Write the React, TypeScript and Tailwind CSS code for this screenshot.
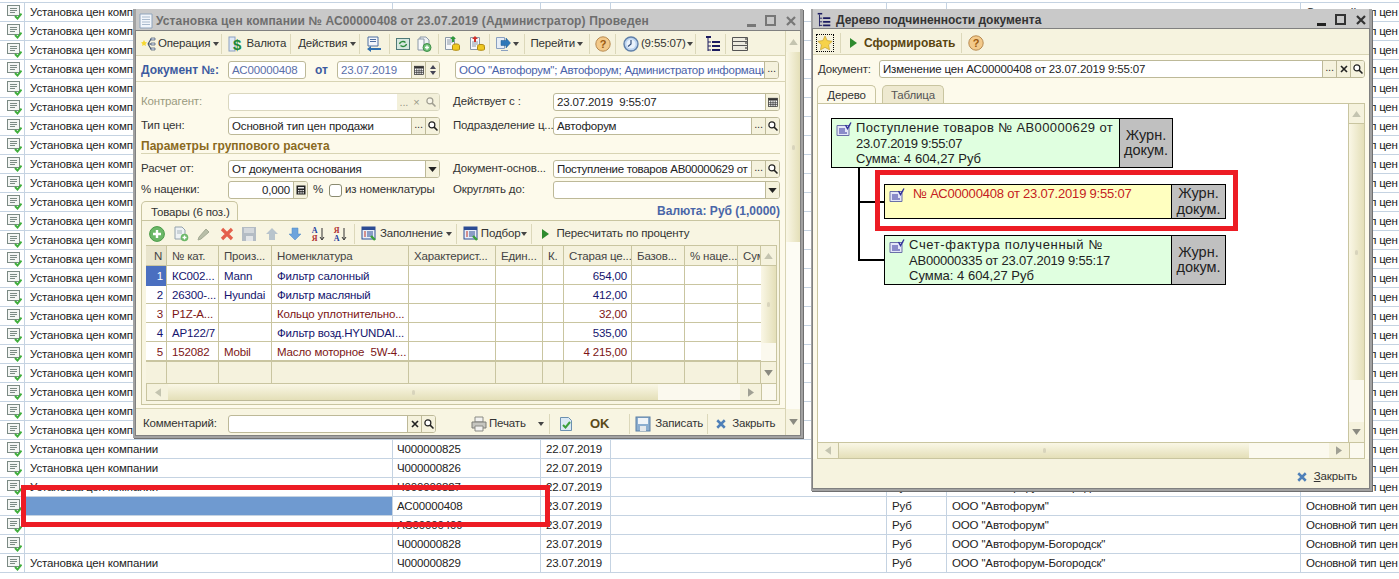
import type { ReactNode } from 'react'

// ---------- icons ----------
const Svg = ({ children, className = 'w-4 h-4' }: { children: ReactNode; className?: string }) => (
  <svg viewBox="0 0 16 16" className={'shrink-0 ' + className}>{children}</svg>
)

const RowDoc = () => (
  <Svg>
    <rect x="1.5" y="1.5" width="12" height="10" fill="#f4f6f4" stroke="#7b8a84" />
    <path d="M4 4.5h7M4 6.5h7M4 8.5h5" stroke="#7b8a84" />
    <path d="M9 12l2.5 2.5L15.5 9.5" fill="none" stroke="#3fae3c" strokeWidth="2" />
  </Svg>
)
const TreeDoc = () => (
  <Svg>
    <path d="M1 3.5h13l-1 1v9H1z" fill="#e4e6f8" stroke="#6a70a8" />
    <path d="M3 7h6M3 9h6M3 11h8" stroke="#30309a" />
    <path d="M9.5 3l2 3.5L15 .5" fill="none" stroke="#30309a" strokeWidth="1.4" />
  </Svg>
)
const OpIcon = () => (
  <Svg>
    <path d="M4 4l1 2 2 .5-1.5 1.5.5 2-2-1-2 1 .5-2L1 6.5 3 6z" fill="#f6d832" />
    <path d="M8 8l3-5h4M8 8h7M8 8l3 5h4" fill="none" stroke="#44546e" strokeWidth="1.2" />
    <path d="M11 2h4v2h-4zM11 7h4v2h-4zM11 12h4v2h-4z" fill="#dfe7f4" stroke="#44546e" strokeWidth=".7" />
  </Svg>
)
const Dollar = () => (
  <Svg>
    <rect x="1" y="1" width="6" height="14" fill="#dfe8f6" stroke="#8aa0c0" />
    <text x="9" y="14" textAnchor="middle" fontSize="15" fontWeight="700" fill="#1d8a3a" fontFamily="Liberation Sans">$</text>
  </Svg>
)
const DocArrow = () => (
  <Svg>
    <path d="M2 1h10v9H2z" fill="#f3f6fb" stroke="#4f6ea0" />
    <path d="M4 3.5h6M4 5.5h6" stroke="#4f6ea0" />
    <path d="M1 13l4-3v2h10v2H5v2z" fill="#2f6fb0" />
  </Svg>
)
const Refresh = () => (
  <Svg>
    <rect x="1.5" y="2.5" width="13" height="11" fill="#d6e8e0" stroke="#4f7a78" />
    <path d="M4.5 8a3.5 3 0 016-1.5M11.5 8a3.5 3 0 01-6 1.5" fill="none" stroke="#2a8a3a" strokeWidth="1.4" />
  </Svg>
)
const DocPlus = () => (
  <Svg>
    <path d="M4 1h6l3 3v8H4z" fill="#eef1f4" stroke="#8b98a6" />
    <path d="M2 3h6v11H2z" fill="#f7f8fa" stroke="#8b98a6" />
    <circle cx="11" cy="11.5" r="4" fill="#6fbf78" stroke="#3f8f48" />
    <path d="M9 11.5h4M11 9.5v4" stroke="#fff" strokeWidth="1.4" />
  </Svg>
)
const DocCoins = () => (
  <Svg>
    <path d="M1.5 1.5h9v12h-9z" fill="#f6f7fa" stroke="#8b98a6" />
    <path d="M3 4h6M3 6h6M3 8h4" stroke="#8b98a6" />
    <path d="M9 0l3 3h-2v3H8V3H6z" fill="#2f9a3a" />
    <ellipse cx="12" cy="9.5" rx="3.5" ry="1.6" fill="#f0c820" stroke="#b08a10" />
    <path d="M8.5 10v3.5c0 1 7 1 7 0V10" fill="#f0c820" stroke="#b08a10" />
  </Svg>
)
const DocRed = () => (
  <Svg>
    <path d="M1.5 1.5h9v12h-9z" fill="#f6f7fa" stroke="#8b98a6" />
    <path d="M3 6h6M3 8h6M3 10h4" stroke="#8b98a6" />
    <path d="M6 0l3 3H7v3H5V3H3z" fill="#d03028" />
    <ellipse cx="12" cy="10" rx="3.5" ry="1.6" fill="#f0c820" stroke="#b08a10" />
    <path d="M8.5 10.5v3c0 1 7 1 7 0v-3" fill="#f0c820" stroke="#b08a10" />
  </Svg>
)
const Transfer = () => (
  <Svg>
    <path d="M1.5 1.5h8v11h-8z" fill="#e6edf6" stroke="#8aa0c0" />
    <path d="M6 4.5h5V2l4.5 5-4.5 5V9.5H6z" fill="#2f78b8" stroke="#1e5a90" strokeWidth=".5" />
    <path d="M6 14h7v1H6z" fill="#8aa0c0" />
  </Svg>
)
const Help = () => (
  <Svg>
    <circle cx="8" cy="8" r="7.2" fill="#f3c98a" stroke="#b88a50" />
    <text x="8" y="12" textAnchor="middle" fontSize="11" fontWeight="700" fill="#9a5a10" fontFamily="Liberation Sans">?</text>
  </Svg>
)
const Clock = () => (
  <Svg>
    <circle cx="8" cy="8" r="7" fill="#bcd4f0" stroke="#5f7fa8" strokeWidth="1.4" />
    <circle cx="8" cy="8" r="4.6" fill="#eaf2fb" />
    <path d="M8 4v4l-3 2.5" fill="none" stroke="#34507c" strokeWidth="1.2" />
  </Svg>
)
const TreeIco = () => (
  <Svg>
    <path d="M1 0h5v2H1z" fill="#1c1c60" />
    <path d="M3 2v13M3 6h3M3 10h3M3 14h3" stroke="#1c1c60" />
    <path d="M7 5h8v2H7zM7 9h8v2H7zM7 13h8v2H7z" fill="#1c1c60" />
  </Svg>
)
const ListIco = () => (
  <Svg className="w-[18px] h-4">
    <path d="M.5 1.5h15v4H.5zM.5 5.5h15v4H.5zM.5 9.5h15v5H.5z" fill="#eceadf" stroke="#555" />
    <path d="M13 3h2M13 7h2M13 12h2" stroke="#222" />
  </Svg>
)
const Calendar = () => (
  <Svg className="w-3 h-3">
    <rect x="2" y="3" width="12" height="11" fill="#fff" stroke="#333" />
    <path d="M2 3h12v3H2z" fill="#333" />
    <path d="M5 6v8M8 6v8M11 6v8M2 9h12M2 11.5h12" stroke="#333" />
  </Svg>
)
const Calc = () => (
  <Svg className="w-3 h-3">
    <rect x="2" y="2" width="12" height="12" fill="#222" />
    <path d="M4 4h8v2H4z" fill="#eee" />
    <path d="M4 8h2v1.5H4zM7 8h2v1.5H7zM10 8h2v1.5h-2zM4 11h2v1.5H4zM7 11h2v1.5H7zM10 11h2v1.5h-2z" fill="#eee" />
  </Svg>
)
const Search = () => (
  <Svg className="w-3 h-3">
    <circle cx="6.5" cy="6.5" r="4" fill="#fff" stroke="#222" strokeWidth="1.6" />
    <path d="M9.5 9.5L14 14" stroke="#222" strokeWidth="2" />
  </Svg>
)
const Cross = () => (
  <Svg className="w-3 h-3">
    <path d="M4 4l8 8M12 4l-8 8" stroke="#222" strokeWidth="2.2" />
  </Svg>
)
const Caret = () => (
  <svg viewBox="0 0 10 6" className="w-[9px] h-[5px] shrink-0"><path d="M0 0h10L5 6z" fill="#222" /></svg>
)
const MiniCaret = () => (
  <svg viewBox="0 0 6 4" className="w-[6px] h-[4px] shrink-0"><path d="M0 0h6L3 4z" fill="#444" /></svg>
)
const AddGreen = () => (
  <Svg>
    <circle cx="8" cy="8" r="7.4" fill="#6cb868" stroke="#4a9a48" />
    <path d="M4 8h8M8 4v8" stroke="#fff" strokeWidth="2.4" />
  </Svg>
)
const DocAdd = () => (
  <Svg>
    <path d="M2 1h7l3 3v9H2z" fill="#eef2f4" stroke="#94a2ac" />
    <path d="M4 5h5M4 7h5" stroke="#a8b4bc" />
    <circle cx="11.5" cy="11.5" r="3.8" fill="#6cb868" />
    <path d="M9.5 11.5h4M11.5 9.5v4" stroke="#fff" strokeWidth="1.4" />
  </Svg>
)
const Pencil = () => (
  <Svg>
    <path d="M3 11l7-8 3 3-8 7-3 1z" fill="#b8bea8" stroke="#a4aa94" />
  </Svg>
)
const RedX = () => (
  <Svg>
    <path d="M3 3l10 10M13 3L3 13" stroke="#e4604c" strokeWidth="3.2" />
  </Svg>
)
const SaveGray = () => (
  <Svg>
    <rect x="1" y="1" width="14" height="14" fill="#b4bcc4" />
    <rect x="3" y="2" width="10" height="5" fill="#d4d8dc" />
    <rect x="5" y="10" width="7" height="5" fill="#e4e6e8" />
  </Svg>
)
const ArrowUp = () => (
  <Svg><path d="M8 2l6 6h-3v6H5V8H2z" fill="#b8c4cc" /></Svg>
)
const ArrowDown = () => (
  <Svg><path d="M8 14l6-6h-3V2H5v6H2z" fill="#6ea4dc" stroke="#4f88c4" strokeWidth=".5" /></Svg>
)
const Sort = ({ top, bottom, c1, c2 }: { top: string; bottom: string; c1: string; c2: string }) => (
  <Svg>
    <text x="4.5" y="7" textAnchor="middle" fontSize="8" fontWeight="700" fill={c1} fontFamily="Liberation Serif">{top}</text>
    <text x="4.5" y="15" textAnchor="middle" fontSize="8" fontWeight="700" fill={c2} fontFamily="Liberation Serif">{bottom}</text>
    <path d="M12 2v11M10 11l2 3 2-3" fill="none" stroke="#333" />
  </Svg>
)
const FillIco = () => (
  <Svg>
    <rect x="1" y="1" width="13" height="12" fill="#e8eef8" stroke="#2c4c94" />
    <path d="M1 1h13v3H1z" fill="#2c4c94" />
    <path d="M3 6h2M3 8h2M3 10h2" stroke="#c03020" />
    <path d="M6 6h6M6 8h6M6 10h6" stroke="#2c4c94" />
    <path d="M10 10l4 4" stroke="#3aa03a" strokeWidth="2.4" />
  </Svg>
)
const Play = () => (
  <svg viewBox="0 0 7 10" className="w-[7px] h-[10px] shrink-0"><path d="M0 0l7 5-7 5z" fill="#2e8b2e" /></svg>
)
const Printer = () => (
  <Svg>
    <path d="M4 1h8v5H4z" fill="#f2f2f0" stroke="#8a8a84" />
    <path d="M1 6h14v6H1z" fill="#c6c6c0" stroke="#7c7c76" />
    <path d="M4 10h8v5H4z" fill="#f2f2f0" stroke="#8a8a84" />
  </Svg>
)
const DocCheck = () => (
  <Svg>
    <path d="M2.5 1.5h8l3 3v10h-11z" fill="#dbe9f4" stroke="#6c90b0" />
    <path d="M5 9l2.5 2.5L12 6" fill="none" stroke="#3ca03c" strokeWidth="2" />
  </Svg>
)
const SaveBlue = () => (
  <Svg>
    <rect x="1" y="1" width="14" height="14" fill="#8caed0" stroke="#5a7fa4" />
    <rect x="3" y="2" width="10" height="6" fill="#f0f4f8" />
    <rect x="5" y="10" width="6" height="5" fill="#e4e8ec" />
  </Svg>
)
const BlueX = () => (
  <Svg className="w-3 h-3">
    <path d="M3 3l10 10M13 3L3 13" stroke="#4f80b8" strokeWidth="3.4" />
  </Svg>
)
const StarIco = () => (
  <Svg>
    <path d="M8 1l2.2 4.6 5 .7-3.6 3.5.9 5L8 12.4l-4.5 2.4.9-5L.8 6.3l5-.7z" fill="#f6d24a" stroke="#c4a030" strokeWidth=".7" />
  </Svg>
)

// ---------- small pieces ----------
const Sep = ({ className = '' }: { className?: string }) => (
  <div className={'w-px h-[20px] shrink-0 bg-[#dcd8ba] ' + className} />
)

const Btn = ({ children, className = 'w-[14px]' }: { children: ReactNode; className?: string }) => (
  <div className={'flex items-center justify-center self-stretch shrink-0 border-l border-[#bdb998] bg-[#f5f2dd] ' + className}>{children}</div>
)

const Dots = () => <span className="text-[11px] leading-none text-[#333] -mt-[3px]">...</span>

const Field = ({ className, text, color = 'text-[#222]', right, children }: { className: string; text?: string; color?: string; right?: boolean; children?: ReactNode }) => (
  <div className={'flex items-stretch shrink-0 h-[18px] bg-white border border-[#bdb998] rounded-[3px] overflow-hidden ' + className}>
    <div className={'flex-1 min-w-0 px-[3px] leading-[16px] whitespace-pre overflow-hidden ' + color + (right ? ' text-right' : '')}>{text}</div>
    {children}
  </div>
)

const LookupBtns = () => (
  <>
    <Btn><Dots /></Btn>
    <Btn><Search /></Btn>
  </>
)

const WinButtons = ({ tone, bar, box, edge }: { tone: string; bar: string; box: string; edge: string }) => (
  <div className={'ml-auto flex items-center ' + edge}>
    <div className={'w-[9px] h-[3px] mt-[9px] ' + bar} />
    <div className={'ml-[9px] w-[11px] h-[11px] border-2 ' + box} />
    <svg viewBox="0 0 12 12" className="ml-[9px] w-3 h-3"><path d="M2 2l8 8M10 2l-8 8" stroke={tone} strokeWidth="2.2" /></svg>
  </div>
)

const ScrollUp = () => <svg viewBox="0 0 10 7" className="w-[9px] h-[6px]"><path d="M5 0l5 7H0z" fill="#c4c4b0" /></svg>
const ScrollDown = () => <svg viewBox="0 0 10 7" className="w-[9px] h-[6px]"><path d="M5 7l5-7H0z" fill="#8a8a80" /></svg>
const ScrollLeft = () => <svg viewBox="0 0 7 10" className="w-[6px] h-[9px]"><path d="M0 5l7-5v10z" fill="#c4c4b0" /></svg>
const ScrollRight = () => <svg viewBox="0 0 7 10" className="w-[6px] h-[9px]"><path d="M7 5L0 0v10z" fill="#a0a094" /></svg>

const Thumb = 'bg-gradient-to-r from-[#faf7e6] to-[#e4dfb8]'
const ThumbH = 'bg-gradient-to-b from-[#faf7e6] to-[#e4dfb8]'

const Grip = () => <div className="w-[3px] h-[5px] rounded-full bg-[#d8d4bc]" />

// ---------- background list ----------
type Row = { name?: string; doc?: string; date?: string; cur?: string; org?: string; sel?: boolean }

const NAME = 'Установка цен компании'
const rows: Row[] = [
  ...Array.from({ length: 23 }, () => ({ name: NAME })),
  { name: NAME, doc: 'Ч000000825', date: '22.07.2019' },
  { name: NAME, doc: 'Ч000000826', date: '22.07.2019' },
  { name: NAME, doc: 'Ч000000827', date: '22.07.2019', cur: 'Руб', org: 'ООО "Автофорум-Богородск"' },
  { doc: 'АС00000408', date: '23.07.2019', cur: 'Руб', org: 'ООО "Автофорум"', sel: true },
  { doc: 'АС00000409', date: '23.07.2019', cur: 'Руб', org: 'ООО "Автофорум"' },
  { doc: 'Ч000000828', date: '23.07.2019', cur: 'Руб', org: 'ООО "Автофорум-Богородск"' },
  { name: NAME, doc: 'Ч000000829', date: '23.07.2019', cur: 'Руб', org: 'ООО "Автофорум-Богородск"' },
]

const ListRow = ({ row }: { row: Row }) => (
  <div className="grid grid-cols-[25px_368px_148px_70px_276px_60px_354px_98px] h-[19px] border-b border-[#c5d3e2] text-[11.5px] tracking-[-0.15px] leading-[18px] text-[#222] whitespace-nowrap">
    <div className="border-r border-[#c5d3e2] pl-[6px] pt-px"><RowDoc /></div>
    <div className={'border-r border-[#c5d3e2] pl-[5px] ' + (row.sel ? 'bg-[#6f9ad0]' : '')}>{row.name}</div>
    <div className="border-r border-[#c5d3e2] pl-[4px]">{row.doc}</div>
    <div className="border-r border-[#c5d3e2] pl-[5px]">{row.date}</div>
    <div className="border-r border-[#c5d3e2]" />
    <div className="border-r border-[#c5d3e2] pl-[5px]">{row.cur}</div>
    <div className="border-r border-[#c5d3e2] pl-[5px]">{row.org}</div>
    <div className="pl-[5px] tracking-[-0.3px]">Основной тип цен</div>
  </div>
)

// ---------- price document window ----------
type Goods = { n: number; cat: string; maker: string; item: string; price: string; red?: boolean; sel?: boolean }

const goods: Goods[] = [
  { n: 1, cat: 'КС002...', maker: 'Mann', item: 'Фильтр салонный', price: '654,00', sel: true },
  { n: 2, cat: '26300-...', maker: 'Hyundai', item: 'Фильтр масляный', price: '412,00' },
  { n: 3, cat: 'P1Z-A...', maker: '', item: 'Кольцо уплотнительно...', price: '32,00', red: true },
  { n: 4, cat: 'AP122/7', maker: '', item: 'Фильтр возд.HYUNDAI...', price: '535,00' },
  { n: 5, cat: '152082', maker: 'Mobil', item: 'Масло моторное  5W-4...', price: '4 215,00', red: true },
]

const tableCols = 'grid grid-cols-[21px_52px_53px_137px_87px_47px_21px_68px_53px_53px_23px]'
const headers = ['N', '№ кат.', 'Произ...', 'Номенклатура', 'Характерист...', 'Един...', 'К.', 'Старая це...', 'Базов...', '% наце...', 'Сум']

const GoodsTable = () => (
  <div className="ml-[4px] w-[631px] border-b border-[#bdb998] flex flex-col">
    <div className="flex">
      <div className="w-[615px]">
        <div className={tableCols + ' h-[21px] bg-[#f5f2dd] text-[#444] leading-[20px] border-y border-[#c9c5a0]'}>
          {headers.map((h, i) => (
            <div key={h} className={'border-r border-[#c9c5a0] overflow-hidden whitespace-nowrap ' + (i === 0 ? 'pl-[8px] bg-[#e8e4cc]' : 'pl-[5px]')}>{h}</div>
          ))}
        </div>
        {goods.map((g) => {
          const tone = g.red ? 'text-[#7c1414]' : 'text-[#14146e]'
          return (
            <div key={g.n} className={tableCols + ' h-[19px] bg-white leading-[20px] border-b border-[#c9c5a0] whitespace-pre ' + tone}>
              <div className={'border-r border-[#c9c5a0] text-right pr-[3px] ' + (g.sel ? 'bg-[#4a6fc0] text-white' : '')}>{g.n}</div>
              <div className="border-r border-[#c9c5a0] pl-[5px]">{g.cat}</div>
              <div className="border-r border-[#c9c5a0] pl-[5px]">{g.maker}</div>
              <div className="border-r border-[#c9c5a0] pl-[5px] overflow-hidden">{g.item}</div>
              <div className="border-r border-[#c9c5a0]" />
              <div className="border-r border-[#c9c5a0]" />
              <div className="border-r border-[#c9c5a0]" />
              <div className="border-r border-[#c9c5a0] text-right pr-[4px]">{g.price}</div>
              <div className="border-r border-[#c9c5a0]" />
              <div className="border-r border-[#c9c5a0]" />
              <div />
            </div>
          )
        })}
        <div className={tableCols + ' h-[23px] bg-[#f5f2dd] border-y border-[#c9c5a0]'}>
          {headers.map((h) => <div key={h} className="border-r border-[#c9c5a0]" />)}
        </div>
      </div>
      <div className="w-[16px] flex flex-col border-y border-r border-[#c9c5a0]">
        <div className="h-[20px] flex items-center justify-center bg-[#f5f2dd] border-b border-[#c9c5a0]"><ScrollUp /></div>
        <div className={'h-[77px] flex items-center justify-center ' + Thumb}><Grip /></div>
        <div className="flex-1 bg-[#fbf9ee]" />
        <div className="h-[22px] flex items-center justify-center bg-[#f5f2dd] border-t border-[#c9c5a0]"><ScrollDown /></div>
      </div>
    </div>
    <div className="flex h-[16px] border-l border-r border-[#c9c5a0]">
      <div className="w-[21px] flex items-center justify-center bg-[#f5f2dd]"><ScrollLeft /></div>
      <div className={'w-[490px] flex items-center justify-center ' + ThumbH}><Grip /></div>
      <div className="w-[82px] bg-[#fbf9ee]" />
      <div className="w-[21px] flex items-center justify-center bg-[#f5f2dd]"><ScrollRight /></div>
      <div className="flex-1 border-l border-[#c9c5a0] bg-[#fbf9ee]" />
    </div>
  </div>
)

const bold = 'font-bold text-[12px] tracking-normal'

const PriceWindow = () => (
  <div className="absolute left-[133px] top-[9px] w-[670px] h-[429px] flex flex-col bg-[#c9c9c9] border-x-[3px] border-b-[3px] border-[#a2a2a2] shadow-[1px_1px_0_#707070]">
    <div className="h-[22px] shrink-0 flex items-center pl-[3px] pt-px text-[12px] tracking-[0.12px] font-bold text-[#6e6e6e] whitespace-nowrap">
      <svg viewBox="0 0 14 16" className="w-[14px] h-[16px] shrink-0">
        <path d="M1 1h12v14H1z" fill="#f2f6fb" stroke="#8fa4bc" />
        <path d="M3 4h8M3 6.5h8M3 9h8M3 11.5h8" stroke="#a9bacd" />
      </svg>
      <span className="ml-[3px]">Установка цен компании № АС00000408 от 23.07.2019 (Администратор) Проведен</span>
      <WinButtons tone="#777" bar="bg-[#777]" box="border-[#777]" edge="mr-[3px]" />
    </div>
    <div className="flex-1 min-h-0 flex bg-[#fdfaeb] text-[11.5px] tracking-[-0.15px] text-[#333] shadow-[0_0_0_1px_#808080]">
      <div className="flex-1 min-w-0 flex flex-col">
        {/* toolbar */}
        <div className="h-[25px] shrink-0 flex items-center border-b border-[#d8d4b4] bg-[#f6f3df] whitespace-nowrap pt-[2px]">
          <div className="ml-[4px]"><OpIcon /></div>
          <span className="ml-[2px]">Операция</span>
          <div className="ml-[3px]"><MiniCaret /></div>
          <Sep className="ml-[2px]" />
          <div className="ml-[6px]"><Dollar /></div>
          <span className="ml-[2px]">Валюта</span>
          <Sep className="ml-[4px]" />
          <span className="ml-[7px]">Действия</span>
          <div className="ml-[3px]"><MiniCaret /></div>
          <Sep className="ml-[3px]" />
          <div className="ml-[6px]"><DocArrow /></div>
          <Sep className="ml-[7px]" />
          <div className="ml-[5px]"><Refresh /></div>
          <div className="ml-[5px]"><DocPlus /></div>
          <Sep className="ml-[6px]" />
          <div className="ml-[5px]"><DocCoins /></div>
          <div className="ml-[9px]"><DocRed /></div>
          <Sep className="ml-[4px]" />
          <div className="ml-[5px]"><Transfer /></div>
          <div className="ml-[2px]"><MiniCaret /></div>
          <Sep className="ml-[5px]" />
          <span className="ml-[5px]">Перейти</span>
          <div className="ml-[2px]"><MiniCaret /></div>
          <Sep className="ml-[6px]" />
          <div className="ml-[5px]"><Help /></div>
          <Sep className="ml-[4px]" />
          <div className="ml-[7px]"><Clock /></div>
          <span className="ml-[2px]">(9:55:07)</span>
          <div className="ml-[1px]"><MiniCaret /></div>
          <Sep className="ml-[2px]" />
          <div className="ml-[9px]"><TreeIco /></div>
          <Sep className="ml-[4px]" />
          <div className="ml-[5px]"><ListIco /></div>
        </div>
        {/* document row */}
        <div className="h-[26px] shrink-0 flex items-center border-b border-[#d8d4b4] pl-[5px] pt-[2px]">
          <div className={'w-[87px] text-[#3c5aa0] ' + bold}>Документ №:</div>
          <Field className="w-[78px]" text="АС00000408" color="text-[#5a6ea8]" />
          <div className={'w-[31px] text-center text-[#3c5aa0] ' + bold}>от</div>
          <Field className="w-[103px]" text="23.07.2019" color="text-[#5a6ea8]">
            <Btn><Calendar /></Btn>
            <Btn className="w-[14px] flex-col gap-[2px]"><span className="w-0 h-0 border-x-[3px] border-x-transparent border-b-[4px] border-b-[#445]" /><span className="w-0 h-0 border-x-[3px] border-x-transparent border-t-[4px] border-t-[#445]" /></Btn>
          </Field>
          <Field className="ml-[15px] w-[324px]" text={'ООО "Автофорум"; Автофорум; Администратор информаци'} color="text-[#4a62a8] tracking-[-0.25px]">
            <Btn><Dots /></Btn>
          </Field>
        </div>
        {/* form */}
        <div className="pl-[5px] pt-[11px] flex flex-col">
          <div className="flex items-center h-[18px]">
            <div className="w-[87px] text-[#9a9a80]">Контрагент:</div>
            <div className="w-[212px] h-[18px] flex bg-white border border-[#dad7bf] rounded-[3px] overflow-hidden">
              <div className="flex-1" />
              <div className="w-[42px] flex items-center justify-around bg-[#f3f0da] text-[#9a9a88] text-[11px]"><span>...</span><span>×</span><span className="opacity-40"><Search /></span></div>
            </div>
            <div className="ml-[13px] w-[100px]">Действует с :</div>
            <Field className="w-[227px]" text="23.07.2019  9:55:07">
              <Btn><Calendar /></Btn>
            </Field>
          </div>
          <div className="flex items-center h-[18px] mt-[6px]">
            <div className="w-[87px]">Тип цен:</div>
            <Field className="w-[212px]" text="Основной тип цен продажи"><LookupBtns /></Field>
            <div className="ml-[13px] w-[100px] whitespace-nowrap">Подразделение ц...</div>
            <Field className="w-[227px]" text="Автофорум"><LookupBtns /></Field>
          </div>
          <div className={'mt-[2px] h-[17px] mr-[5px] leading-[18px] text-[#8a6a1e] border-b border-[#d8d4b4] ' + bold}>Параметры группового расчета</div>
          <div className="flex items-center h-[18px] mt-[6px]">
            <div className="w-[87px]">Расчет от:</div>
            <Field className="w-[212px]" text="От документа основания"><Btn><Caret /></Btn></Field>
            <div className="ml-[13px] w-[100px] whitespace-nowrap">Документ-основ...</div>
            <Field className="w-[227px]" text="Поступление товаров АВ00000629 от :" color="text-[#222] tracking-[-0.3px]"><LookupBtns /></Field>
          </div>
          <div className="flex items-center h-[18px] mt-[3px]">
            <div className="w-[87px]">% наценки:</div>
            <Field className="w-[80px]" text="0,000" right><Btn><Calc /></Btn></Field>
            <span className="ml-[5px] w-[15px]">%</span>
            <div className="ml-[1px] w-[13px] h-[13px] bg-white border border-[#8a8a70] rounded-[3px]" />
            <span className="ml-[3px] w-[95px] whitespace-nowrap">из номенклатуры</span>
            <div className="ml-[13px] w-[100px]">Округлять до:</div>
            <Field className="w-[227px]"><Btn><Caret /></Btn></Field>
          </div>
        </div>
        {/* tabs */}
        <div className="mt-[2px] h-[19px] shrink-0 pl-[5px] pr-[5px] flex items-stretch">
          <div className="w-[97px] pl-[9px] bg-[#fbf8e6] border border-b-0 border-[#c9c5a0] rounded-t-[5px] leading-[20px]">Товары (6 поз.)</div>
          <div className={'ml-auto text-[#4a66a8] leading-[20px] ' + bold}>Валюта: Руб (1,0000)</div>
        </div>
        <div className="ml-[5px] mr-[5px] h-[185px] shrink-0 border border-[#c9c5a0] bg-[#f8f5e2]">
          <div className="h-[24px] flex items-center whitespace-nowrap pt-px">
            <div className="ml-[7px]"><AddGreen /></div>
            <div className="ml-[8px]"><DocAdd /></div>
            <div className="ml-[7px]"><Pencil /></div>
            <div className="ml-[7px]"><RedX /></div>
            <div className="ml-[6px]"><SaveGray /></div>
            <div className="ml-[7px]"><ArrowUp /></div>
            <div className="ml-[7px]"><ArrowDown /></div>
            <div className="ml-[7px]"><Sort top="А" bottom="Я" c1="#1c3c9c" c2="#b03030" /></div>
            <div className="ml-[6px]"><Sort top="Я" bottom="А" c1="#b03030" c2="#1c3c9c" /></div>
            <Sep className="ml-[6px]" />
            <div className="ml-[6px]"><FillIco /></div>
            <span className="ml-[3px]">Заполнение</span>
            <div className="ml-[3px]"><MiniCaret /></div>
            <Sep className="ml-[4px]" />
            <div className="ml-[6px]"><FillIco /></div>
            <span className="ml-[2px]">Подбор</span>
            <div className="ml-[1px]"><MiniCaret /></div>
            <Sep className="ml-[4px]" />
            <div className="ml-[10px]"><Play /></div>
            <span className="ml-[7px]">Пересчитать по проценту</span>
          </div>
          <GoodsTable />
        </div>
        {/* footer */}
        <div className="mt-[3px] flex-1 border-t border-[#d8d4b4] bg-[#f8f5e2] flex items-center whitespace-nowrap pl-[7px] pt-[3px]">
          <div className="w-[85px]">Комментарий:</div>
          <Field className="w-[208px]">
            <Btn><Cross /></Btn>
            <Btn><Search /></Btn>
          </Field>
          <div className="ml-[35px]"><Printer /></div>
          <span className="ml-[2px] w-[35px]">Печать</span>
          <div className="ml-[14px]"><MiniCaret /></div>
          <Sep className="ml-[5px]" />
          <div className="ml-[8px]"><DocCheck /></div>
          <span className="ml-[16px] font-bold text-[13px] text-[#5a4a1a]">OK</span>
          <Sep className="ml-[20px]" />
          <div className="ml-[5px]"><SaveBlue /></div>
          <span className="ml-[4px]">Записать</span>
          <Sep className="ml-[4px]" />
          <div className="ml-[7px]"><BlueX /></div>
          <span className="ml-[5px]">Закрыть</span>
        </div>
      </div>
      {/* window scrollbar */}
      <div className="w-[15px] shrink-0 flex flex-col border-l border-[#d8d4b4]">
        <div className="h-[21px] flex items-center justify-center bg-[#f6f3df]"><ScrollUp /></div>
        <div className={'h-[190px] flex items-center justify-center ' + Thumb}><Grip /></div>
        <div className="flex-1 bg-[#fdfcf4]" />
        <div className="h-[26px] flex items-center justify-center bg-[#f6f3df]"><ScrollDown /></div>
      </div>
    </div>
  </div>
)

// ---------- subordination tree window ----------
const TreeCard = ({ className, tone, children, journal }: { className: string; tone: string; children: ReactNode; journal: string }) => (
  <div className={'absolute flex border border-black text-[13px] tracking-normal leading-[15.5px] ' + tone + ' ' + className}>
    <div className="flex-1 min-w-0 flex pl-[4px] pt-[1px]">
      <div className="w-[16px] shrink-0 pt-[2px]"><TreeDoc /></div>
      <div className="pl-[4px] whitespace-nowrap">{children}</div>
    </div>
    <div className={'shrink-0 flex flex-col items-center justify-center bg-[#c0c0c0] border-l border-black text-[#222] text-[14.5px] ' + journal}>
      <span>Журн.</span>
      <span>докум.</span>
    </div>
  </div>
)

const TreeWindow = () => (
  <div className="absolute left-[811px] top-[9px] w-[561px] h-[482px] flex flex-col bg-[#c9c9c9] border-l-2 border-r-[3px] border-b-[3px] border-[#a2a2a2] shadow-[1px_1px_0_#707070]">
    <div className="h-[20px] shrink-0 flex items-center pl-[3px] pt-px text-[12px] font-bold text-[#333] whitespace-nowrap">
      <div className="scale-90"><TreeIco /></div>
      <span className="ml-[4px]">Дерево подчиненности документа</span>
      <WinButtons tone="#333" bar="bg-[#222]" box="border-[#333]" edge="mr-[2px]" />
    </div>
    <div className="flex-1 min-h-0 flex flex-col bg-[#fdfaeb] text-[11.5px] tracking-[-0.15px] text-[#333] shadow-[0_0_0_1px_#808080]">
      <div className="h-[26px] shrink-0 flex items-center bg-[#f6f3df] border-b border-[#d8d4b4] pt-[2px]">
        <div className="ml-[3px] w-[18px] h-[18px] border border-dotted border-black"><StarIco /></div>
        <Sep className="ml-[6px]" />
        <div className="ml-[9px]"><Play /></div>
        <span className={'ml-[7px] text-[#5a4510] ' + bold}>Сформировать</span>
        <Sep className="ml-[6px]" />
        <div className="ml-[6px]"><Help /></div>
      </div>
      <div className="h-[30px] shrink-0 flex items-start pt-[5px] pl-[5px]">
        <div className="w-[61px] leading-[18px]">Документ:</div>
        <Field className="w-[486px]" text="Изменение цен АС00000408 от 23.07.2019 9:55:07">
          <Btn><Dots /></Btn>
          <Btn><Cross /></Btn>
          <Btn><Search /></Btn>
        </Field>
      </div>
      <div className="h-[18px] shrink-0 pl-[4px] flex items-stretch">
        <div className="w-[59px] text-center leading-[18px] bg-[#fdfaeb] border border-b-0 border-[#c9c5a0] rounded-t-[5px]">Дерево</div>
        <div className="ml-[6px] w-[62px] text-center leading-[18px] bg-[#eee9d0] border border-b-0 border-[#c9c5a0] rounded-t-[5px] text-[#555]">Таблица</div>
      </div>
      <div className="ml-[4px] w-[548px] h-[356px] shrink-0 flex flex-col border border-[#c9c5a0]">
        <div className="flex-1 min-h-0 flex">
          <div className="flex-1 relative bg-white text-[#222]">
            <div className="absolute left-[40px] top-[64px] w-[2px] h-[93px] bg-black" />
            <div className="absolute left-[40px] top-[97px] w-[27px] h-[2px] bg-black" />
            <div className="absolute left-[40px] top-[155px] w-[27px] h-[2px] bg-black" />
            <TreeCard className="left-[13px] top-[14px] w-[342px] h-[50px]" tone="bg-[#e0ffe0]" journal="w-[53px]">
              <span className="block tracking-[0.37px]">Поступление товаров № АВ00000629 от</span>
              <span className="block tracking-[-0.33px]">23.07.2019 9:55:07</span>
              <span className="block">Сумма: 4 604,27 Руб</span>
            </TreeCard>
            <TreeCard className="left-[66px] top-[80px] w-[342px] h-[35px]" tone="bg-[#ffffc0]" journal="w-[54px]">
              <span className="block pl-[4px] tracking-[-0.2px] text-[#c42020]">№ АС00000408 от 23.07.2019 9:55:07</span>
            </TreeCard>
            <TreeCard className="left-[66px] top-[131px] w-[342px] h-[50px]" tone="bg-[#e0ffe0]" journal="w-[54px]">
              <span className="block tracking-[0.64px]">Счет-фактура полученный №</span>
              <span className="block tracking-[-0.2px]">АВ00000335 от 23.07.2019 9:55:17</span>
              <span className="block">Сумма: 4 604,27 Руб</span>
            </TreeCard>
          </div>
          <div className="w-[16px] shrink-0 flex flex-col border-l border-[#c9c5a0]">
            <div className="h-[20px] flex items-center justify-center bg-[#f5f2dd] border-b border-[#c9c5a0]"><ScrollUp /></div>
            <div className={'h-[256px] flex items-center justify-center ' + Thumb}><Grip /></div>
            <div className="flex-1 bg-[#fbf9ee]" />
            <div className="h-[20px] flex items-center justify-center bg-[#f5f2dd]"><ScrollDown /></div>
          </div>
        </div>
        <div className="h-[16px] shrink-0 flex border-t border-[#c9c5a0]">
          <div className="w-[21px] flex items-center justify-center bg-[#f5f2dd] border-r border-[#c9c5a0]"><ScrollLeft /></div>
          <div className={'w-[410px] flex items-center justify-center ' + ThumbH}><Grip /></div>
          <div className="w-[80px] bg-[#fbf9ee]" />
          <div className="w-[20px] flex items-center justify-center bg-[#f5f2dd]"><ScrollRight /></div>
          <div className="flex-1 border-l border-[#c9c5a0] bg-[#fbf9ee]" />
        </div>
      </div>
      <div className="flex-1 flex items-center justify-end pr-[12px] pt-[6px] bg-[#f6f3df]">
        <BlueX />
        <span className="ml-[6px]"><span className="underline">З</span>акрыть</span>
      </div>
    </div>
  </div>
)

export default function App() {
  return (
    <div className="relative w-[1399px] h-[579px] overflow-hidden bg-white font-['Liberation_Sans',Arial,sans-serif]">
      <div className="pt-[2px]">
        <div className="border-t border-[#c5d3e2]">
          {rows.map((r, i) => <ListRow key={i} row={r} />)}
        </div>
      </div>
      <PriceWindow />
      <TreeWindow />
      {/* red marks drawn over the screenshot */}
      <div className="absolute left-[21px] top-[485px] w-[529px] h-[42px] border-[5px] border-[#ed1c24]" />
      <div className="absolute left-[875px] top-[170px] w-[363px] h-[61px] border-[5px] border-[#ed1c24]" />
    </div>
  )
}
